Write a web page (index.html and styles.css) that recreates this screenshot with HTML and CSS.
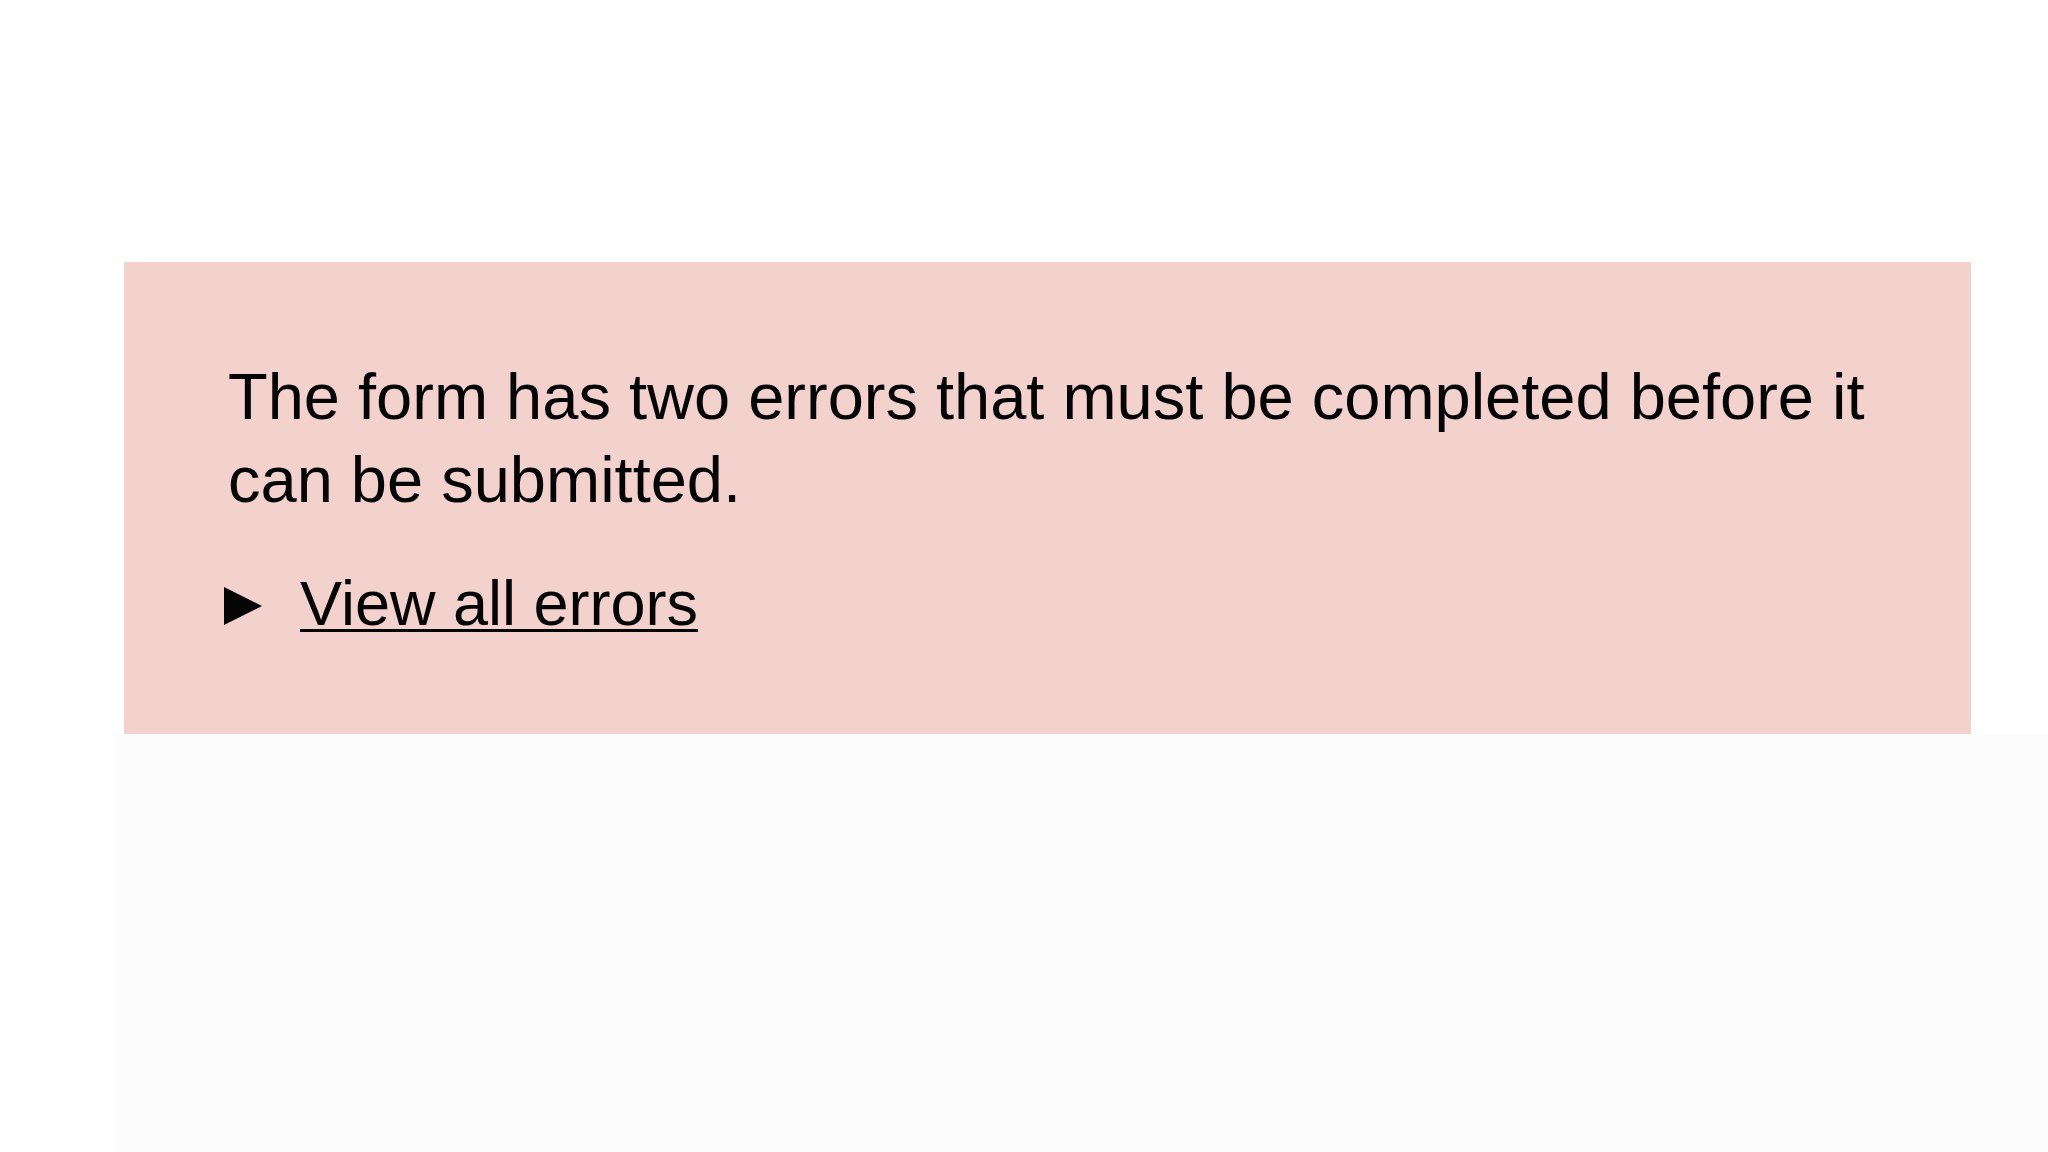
FILE: index.html
```html
<!DOCTYPE html>
<html lang="en">
<head>
<meta charset="utf-8">
<title>Error summary</title>
<link rel="stylesheet" href="styles.css">
</head>
<body>
  <div class="error-summary" role="alert">
    <p class="error-summary__text">The form has two errors that must be completed before it can be submitted.</p>
    <details class="error-summary__details">
      <summary class="error-summary__toggle">
        <svg class="error-summary__marker" width="38" height="38" viewBox="0 0 38 38" aria-hidden="true"><polygon points="0,0 38,19 0,38" fill="currentColor"/></svg>
        <span class="error-summary__link">View all errors</span>
      </summary>
    </details>
  </div>
  <div class="page-backdrop"></div>
</body>
</html>
```
FILE: styles.css
```css
html, body {
  margin: 0;
  padding: 0;
}

body {
  min-height: 100vh;
  display: flex;
  flex-direction: column;
  background: #ffffff;
  font-family: "Liberation Sans", Arial, Helvetica, sans-serif;
  color: #050505;
}

.error-summary {
  margin: 262px 77px 0 124px;
  padding: 93px 60px 89px 104px;
  background: #f3d2cd;
}

.error-summary__text {
  margin: 0 0 41px;
  font-size: 65px;
  line-height: 83px;
}

.error-summary__details {
  margin: 0;
}

.error-summary__toggle {
  list-style: none;
  display: flex;
  align-items: center;
  gap: 38px;
  margin-left: -4px;
  font-size: 63px;
  line-height: 83px;
  cursor: pointer;
}

.error-summary__toggle::-webkit-details-marker {
  display: none;
}

.error-summary__marker {
  flex: none;
  display: block;
  margin-top: 4px;
}

.error-summary__link {
  text-decoration: underline;
  text-decoration-thickness: 3px;
  text-underline-offset: 4px;
}

.page-backdrop {
  flex: 1;
  margin-left: 114px;
  background: #fcfcfc;
}
```
